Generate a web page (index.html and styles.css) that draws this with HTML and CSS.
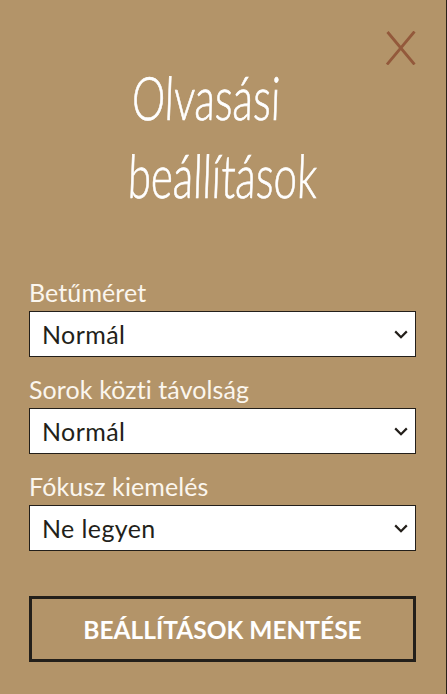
FILE: index.html
```html
<!DOCTYPE html>
<html lang="hu">
<head>
<meta charset="utf-8">
<title>Olvasási beállítások</title>
<link rel="stylesheet" href="styles.css">
</head>
<body>
<main class="panel">
  <button class="close" type="button" aria-label="Bezárás">
    <svg class="close-icon" viewBox="0 0 30 34" aria-hidden="true"><path d="M1.5 1 28.5 33.5M28.5 .5 1 33.5"/></svg>
  </button>
  <h1 class="title"><span class="title-line">Olvasási</span><span class="title-line second">beállítások</span></h1>
  <form class="form">
    <div class="field">
      <label class="label" for="size">Betűméret</label>
      <select class="select" id="size"><option>Normál</option></select>
    </div>
    <div class="field">
      <label class="label" for="line">Sorok közti távolság</label>
      <select class="select" id="line"><option>Normál</option></select>
    </div>
    <div class="field">
      <label class="label" for="focus">Fókusz kiemelés</label>
      <select class="select" id="focus"><option>Ne legyen</option></select>
    </div>
    <button class="save" type="button">BEÁLLÍTÁSOK MENTÉSE</button>
  </form>
</main>
</body>
</html>
```
FILE: styles.css
```css
html, body {
  margin: 0;
  height: 100%;
  overflow: hidden;
}
body {
  background: #b39469;
  font-family: Lato, "Open Sans", sans-serif;
}
.panel {
  position: relative;
  box-sizing: border-box;
  height: 694px;
  padding: 58px 30px 0 29px;
  border-right: 1px solid #2a2017;
}
.close {
  position: absolute;
  top: 31px;
  right: 30px;
  width: 30px;
  height: 34px;
  padding: 0;
  border: 0;
  background: none;
}
.close-icon {
  display: block;
  width: 30px;
  height: 34px;
  fill: none;
  stroke: #93593b;
  stroke-width: 2.8;
}
.title {
  margin: 0 0 62px;
  padding-left: 103px;
  color: #fff;
  font-size: 60px;
  font-weight: 300;
  line-height: 78px;
  -webkit-text-stroke: 0.7px #fff;
}
.title-line {
  display: block;
  transform: scaleX(0.7) skewX(-3deg);
  transform-origin: left center;
  white-space: nowrap;
}
.title-line.second {
  margin-left: -4px;
}
.form {
  display: flex;
  flex-direction: column;
}
.field {
  display: flex;
  flex-direction: column;
  margin-bottom: 16px;
}
.label {
  padding-bottom: 2px;
  color: #fbf6ee;
  font-size: 25px;
  letter-spacing: 0.1px;
  line-height: 33px;
}
.select {
  box-sizing: border-box;
  width: 387px;
  height: 46px;
  padding: 0 30px 0 12px;
  border: 1px solid #231f1a;
  border-radius: 0;
  appearance: none;
  background: #fff url("data:image/svg+xml,%3Csvg xmlns='http://www.w3.org/2000/svg' width='14' height='9' viewBox='0 0 14 9'%3E%3Cpath d='M1.2 1.4 7 7.2 12.8 1.4' fill='none' stroke='%23231f1a' stroke-width='2.2'/%3E%3C/svg%3E") no-repeat right 7px center;
  color: #231f1a;
  font-family: inherit;
  font-size: 25px;
  letter-spacing: 0.4px;
}
.save {
  box-sizing: border-box;
  width: 387px;
  height: 66px;
  margin-top: 29px;
  border: 3px solid #231f1a;
  background: none;
  color: #fff;
  font-family: inherit;
  font-size: 24.5px;
  font-weight: 700;
}
```
